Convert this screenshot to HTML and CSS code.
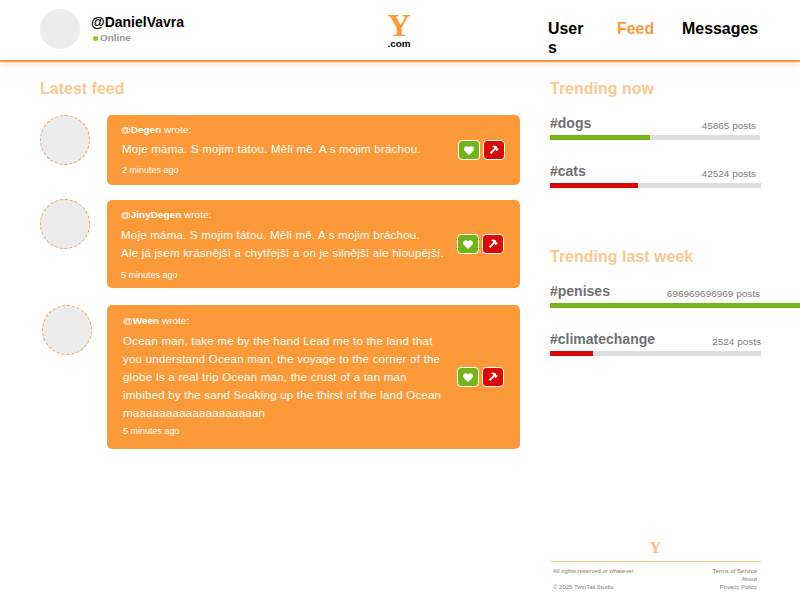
FILE: index.html
```html
<!DOCTYPE html>
<html lang="cs">
<head>
<meta charset="utf-8">
<title>Y.com</title>
<link rel="stylesheet" href="styles.css">
</head>
<body>
<svg class="defs" width="0" height="0">
  <symbol id="heart" viewBox="0 0 10 9"><path d="M5 9 .8 4.9C-.3 3.7-.2 1.8 1 .8 2.200-.2 4 0 5 1.300 6-0 7.800-.2 9 .8c1.200 1 1.300 2.900.2 4.100z"/></symbol>
  <symbol id="hammer" viewBox="0 0 10 10"><path d="M2.800 1.200C4.300.1 6.200.1 7.400 1.300l.8.800-.1.800.5.500.5-.1.700.8-2 2.100-.9-.8.1-.6-.4-.4L2.200 9 .8 7.600l4.500-4.400C5 2.200 4 1.600 2.800 1.200z"/></symbol>
</svg>
<header class="header">
  <div class="profile">
    <div class="profile-avatar"></div>
    <div>
      <div class="profile-name">@DanielVavra</div>
      <div class="profile-status"><i class="dot"></i>Online</div>
    </div>
  </div>
  <div class="logo"><div class="logo-y">Y</div><div class="logo-com">.com</div></div>
  <nav class="nav">
    <a class="nav-users">Users</a>
    <a class="nav-feed">Feed</a>
    <a>Messages</a>
  </nav>
</header>
<main class="main">
  <section class="feed">
    <h2>Latest feed</h2>
    <article class="post post-first">
      <div class="avatar"></div>
      <div class="card">
        <div class="content">
          <div class="author"><b>@Degen</b> wrote:</div>
          <p>Moje máma. S mojim tátou. Měli mě. A s mojim bráchou.</p>
          <div class="time">2 minutes ago</div>
        </div>
        <div class="actions">
          <button class="like"><svg width="10" height="9"><use href="#heart"/></svg></button>
          <button class="bash"><svg width="10" height="10"><use href="#hammer"/></svg></button>
        </div>
      </div>
    </article>
    <article class="post post-second">
      <div class="avatar"></div>
      <div class="card">
        <div class="content">
          <div class="author"><b>@JinyDegen</b> wrote:</div>
          <p>Moje máma. S mojim tátou. Měli mě. A s mojim bráchou.<br>Ale já jsem krásnější a chytřejší a on je silnější ale hloupější.</p>
          <div class="time">5 minutes ago</div>
        </div>
        <div class="actions">
          <button class="like"><svg width="10" height="9"><use href="#heart"/></svg></button>
          <button class="bash"><svg width="10" height="10"><use href="#hammer"/></svg></button>
        </div>
      </div>
    </article>
    <article class="post post-third">
      <div class="avatar"></div>
      <div class="card">
        <div class="content">
          <div class="author"><b>@Ween</b> wrote:</div>
          <p>Ocean man, take me by the hand Lead me to the land that<br>you understand Ocean man, the voyage to the corner of the<br>globe Is a real trip Ocean man, the crust of a tan man<br>imbibed by the sand Soaking up the thirst of the land Ocean<br>maaaaaaaaaaaaaaaaaaan</p>
          <div class="time">5 minutes ago</div>
        </div>
        <div class="actions">
          <button class="like"><svg width="10" height="9"><use href="#heart"/></svg></button>
          <button class="bash"><svg width="10" height="10"><use href="#hammer"/></svg></button>
        </div>
      </div>
    </article>
  </section>
  <aside class="side">
    <section class="trends">
      <h2>Trending now</h2>
      <div class="trend trend-short">
        <div class="trend-row"><b>#dogs</b><span>45865 posts</span></div>
        <div class="track"><div class="bar" style="width:100px"></div></div>
      </div>
      <div class="trend trend-inset">
        <div class="trend-row"><b>#cats</b><span>42524 posts</span></div>
        <div class="track"><div class="bar bar-red" style="width:88px"></div></div>
      </div>
    </section>
    <section class="trends">
      <h2>Trending last week</h2>
      <div class="trend trend-near">
        <div class="trend-row"><b>#penises</b><span>696969696969 posts</span></div>
        <div class="track"><div class="bar" style="width:250px"></div></div>
      </div>
      <div class="trend">
        <div class="trend-row"><b>#climatechange</b><span>2524 posts</span></div>
        <div class="track"><div class="bar bar-red" style="width:43px"></div></div>
      </div>
    </section>
    <footer class="footer">
      <div class="footer-logo">Y</div>
      <div class="footer-info">
        <div class="legal"><span>All rights reserved or whatever.</span><span>© 2025 TwinTail Studio</span></div>
        <div class="links"><a>Terms of Service</a><a>About</a><a>Privacy Policy</a></div>
      </div>
    </footer>
  </aside>
</main>
</body>
</html>
```
FILE: styles.css
```css
* { box-sizing: border-box; }
body {
  margin: 0;
  height: 600px;
  overflow: hidden;
  background: #fff;
  font-family: "Liberation Sans", Arial, sans-serif;
  display: flex;
  flex-direction: column;
}
.defs { display: none; }
.header {
  height: 62px;
  flex: none;
  border-bottom: 2px solid #fc9a3a;
  box-shadow: 0 2px 6px rgba(252, 154, 58, .3);
  display: grid;
  grid-template-columns: 347px 24px 1fr;
  padding-left: 40px;
}
.profile { display: flex; gap: 11px; padding-top: 9px; }
.profile-avatar { width: 40px; height: 40px; border-radius: 50%; background: #ececec; }
.profile-name { font-size: 14px; font-weight: bold; line-height: 16px; margin-top: 5px; }
.profile-status {
  display: flex;
  align-items: center;
  gap: 2px;
  padding-left: 2px;
  margin-top: 2px;
  font-size: 9.9px;
  font-weight: bold;
  line-height: 12px;
  color: #999;
}
.dot { width: 5px; height: 5px; border-radius: 50%; background: #70dc0c; margin-top: 1px; }
.logo { padding-top: 11px; text-align: center; }
.logo-y { font: bold 32px/28px "Liberation Serif", serif; color: #fc9a3a; }
.logo-com { font-size: 9.95px; font-weight: bold; line-height: 12px; margin-top: -1px; }
.nav {
  display: flex;
  padding: 19px 0 0 137px;
  font-size: 15.9px;
  font-weight: bold;
  line-height: 19px;
}
.nav-users { width: 38px; margin-right: 31px; word-break: break-all; }
.nav-feed { color: #fc9a3a; margin-right: 28px; }
.main { display: grid; grid-template-columns: 480px 1fr; gap: 30px; padding-left: 40px; flex: 1; }
h2 { margin: 0; font-size: 16px; line-height: 18px; color: #fdc88f; }
.feed { padding-top: 18px; }
.post { display: flex; }
.post-first { margin-top: 17px; }
.post-second { margin-top: 14px; }
.post-third { margin-top: 17px; }
.avatar {
  width: 50px;
  height: 50px;
  flex: none;
  border-radius: 50%;
  border: 1px dashed #fc9a3a;
  background: #ececec;
  margin-right: 17px;
}
.card {
  flex: 1;
  display: flex;
  align-items: center;
  justify-content: space-between;
  background: #fc9a3a;
  border-radius: 5px;
  color: #fff;
  padding: 0 15px 0 14px;
}
.post-first .card { height: 70px; }
.post-second .card { height: 88px; margin-top: 1px; padding-right: 16px; }
.post-third .card { height: 144px; padding: 0 16px; }
.post-third .avatar { margin-left: 2px; margin-right: 15px; }
.content { align-self: flex-start; padding-top: 9px; white-space: nowrap; }
.post-third .content { padding-top: 10px; }
.author { font-size: 9.95px; line-height: 12px; letter-spacing: .03px; }
.content p { margin: 4px 0 0; font-size: 11.5px; line-height: 18px; letter-spacing: .225px; }
.post-first p { padding-left: 1px; }
.post-first .time { padding-left: 1px; }
.post-second p { margin-top: 5px; }
.post-third p { margin-top: 5px; }
.time { font-size: 9px; line-height: 10px; margin-top: 7px; }
.post-second .time { margin-top: 8px; }
.post-third .time { margin-top: 4px; }
.actions { display: flex; gap: 3px; }
.actions button {
  width: 22px;
  height: 20px;
  padding: 0;
  border: 1px solid #fff;
  border-radius: 4px;
  display: flex;
  align-items: center;
  justify-content: center;
}
.actions svg { fill: #fff; }
.like { background: #74b41a; }
.bash { background: #db0808; }
.side { padding-top: 18px; display: flex; flex-direction: column; }
.trends { height: 168px; }
.trend { width: 211px; margin-bottom: 21px; }
.trend-short { width: 210px; }
h2 + .trend { margin-top: 15px; }
.trend-row {
  display: flex;
  justify-content: space-between;
  align-items: flex-end;
  height: 19px;
  margin-bottom: 3px;
  font-size: 14px;
  line-height: 18px;
  color: #707070;
}
.trend-row b { align-self: flex-start; line-height: 16px; padding-top: 2px; }
.trend-row span { font-size: 9.98px; line-height: 12px; color: #808080; }
.trend-short .trend-row { padding-right: 4px; }
.trend-inset .trend-row { padding-right: 5px; }
.trend-near .trend-row { padding-right: 1px; }
.track { height: 5px; background: #dedede; }
.bar { height: 5px; background: #74b41a; }
.bar-red { background: #db0808; }
.footer { width: 211px; margin-top: auto; padding-bottom: 9px; }
.footer-logo {
  font: bold 17px/20px "Liberation Serif", serif;
  color: #fdc183;
  text-align: center;
  padding-bottom: 3px;
  border-bottom: 1px solid #fdc183;
}
.footer-info {
  display: flex;
  justify-content: space-between;
  padding: 5px 4px 0 3px;
  font-size: 5.98px;
  line-height: 8px;
  color: #808080;
}
.legal, .links { display: flex; flex-direction: column; justify-content: space-between; }
.links { text-align: right; }
```
